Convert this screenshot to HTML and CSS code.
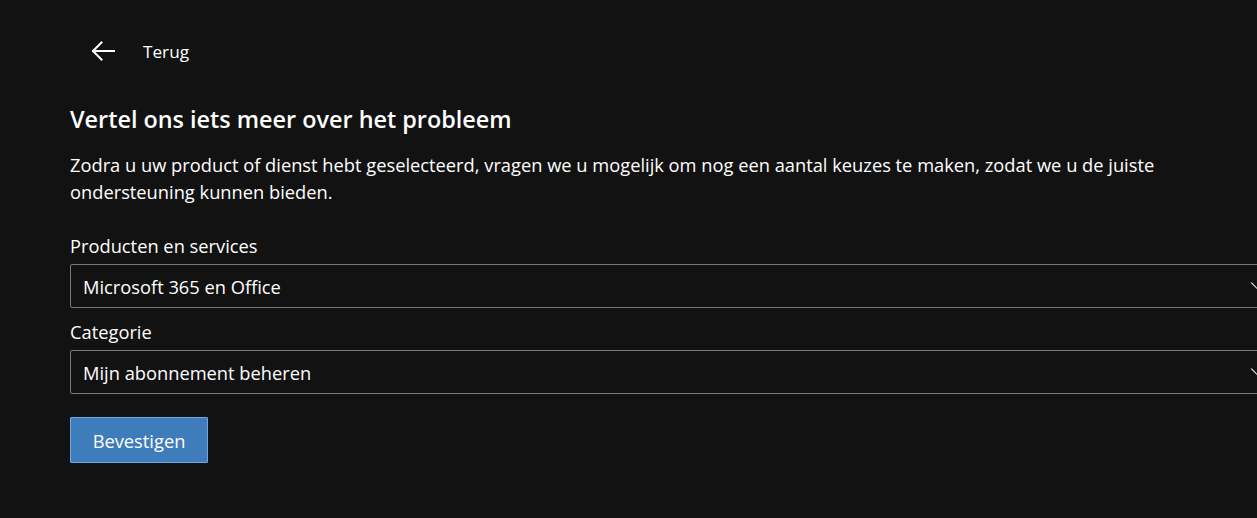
FILE: index.html
```html
<!DOCTYPE html>
<html lang="nl">
<head>
<meta charset="utf-8">
<title>Vertel ons iets meer over het probleem</title>
<link rel="stylesheet" href="styles.css">
</head>
<body>
<div class="page">
  <a class="back" href="#">
    <svg class="back-icon" width="24" height="20" viewBox="0 0 24 20" aria-hidden="true">
      <path d="M23 10H2M10.5 1.5L2 10l8.5 8.5" fill="none" stroke="#fff" stroke-width="2" stroke-linecap="square"/>
    </svg>
    <span class="back-text">Terug</span>
  </a>
  <h1 class="title">Vertel ons iets meer over het probleem</h1>
  <p class="intro">Zodra u uw product of dienst hebt geselecteerd, vragen we u mogelijk om nog een aantal keuzes te maken, zodat we u de juiste ondersteuning kunnen bieden.</p>
  <div class="field">
    <label class="label">Producten en services</label>
    <div class="select"><span>Microsoft 365 en Office</span><span class="chev"></span></div>
  </div>
  <div class="field">
    <label class="label">Categorie</label>
    <div class="select"><span>Mijn abonnement beheren</span><span class="chev"></span></div>
  </div>
  <button class="btn">Bevestigen</button>
</div>
</body>
</html>
```
FILE: styles.css
```css
html, body {
  margin: 0;
  padding: 0;
  background: #121212;
  overflow: hidden;
}
body {
  width: 1257px;
  height: 518px;
  font-family: "Open Sans", "Noto Sans", sans-serif;
  color: #ffffff;
}
.page {
  padding: 31px 0 0 70px;
  width: 1206px;
}
.back {
  display: flex;
  align-items: center;
  gap: 28px;
  color: #fff;
  text-decoration: none;
  padding-left: 21px;
  height: 40px;
}
.back-icon {
  display: block;
}
.back-text {
  font-size: 17.2px;
}
.title {
  font-size: 23.4px;
  font-weight: 600;
  margin: 32px 0 0 0;
  line-height: 32px;
}
.intro {
  font-size: 18.3px;
  line-height: 27px;
  margin: 16px 0 0 0;
  width: 1165px;
}
.field:first-of-type {
  margin-top: 29px;
}
.label {
  display: block;
  font-size: 18.3px;
  line-height: 24px;
  margin-bottom: 6px;
}
.field + .field .label {
  margin-top: 12px;
}
.select {
  box-sizing: border-box;
  height: 44px;
  border: 1px solid #7a7a7a;
  border-radius: 2px;
  display: flex;
  align-items: center;
  justify-content: space-between;
  padding: 0 12px 0 12px;
  font-size: 18.3px;
}
.chev {
  width: 9px;
  height: 9px;
  border-right: 1.5px solid #fff;
  border-bottom: 1.5px solid #fff;
  transform: rotate(45deg);
  margin-top: -6px;
}
.btn {
  margin-top: 23px;
  width: 138px;
  height: 46px;
  background: #3e7cbc;
  border: 1px solid #74a6dd;
  border-radius: 1px;
  color: #fff;
  font-family: "Open Sans", "Noto Sans", sans-serif;
  font-size: 18.3px;
  padding: 0;
  display: block;
}
```
